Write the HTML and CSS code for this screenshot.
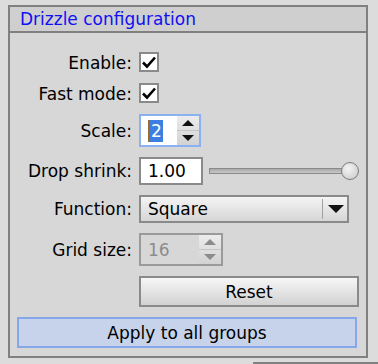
FILE: index.html
```html
<!DOCTYPE html>
<html lang="en">
<head>
    <meta charset="UTF-8">
    <meta name="viewport" content="width=device-width, initial-scale=1.0">
    <title>Drizzle configuration</title>
    <link rel="stylesheet" href="styles.css">
</head>
<body>
    <div class="panel">
        <div class="panel-title">Drizzle configuration</div>
        <div class="panel-body">
            <label class="label">Enable:</label>
            <div class="row">
                <span class="check">
                    <svg width="16" height="16" viewBox="0 0 16 16"><polyline points="2,8.5 6,12.5 14,3.5" fill="none" stroke="#000" stroke-width="2.6"/></svg>
                </span>
            </div>

            <label class="label">Fast mode:</label>
            <div class="row">
                <span class="check">
                    <svg width="16" height="16" viewBox="0 0 16 16"><polyline points="2,8.5 6,12.5 14,3.5" fill="none" stroke="#000" stroke-width="2.6"/></svg>
                </span>
            </div>

            <label class="label">Scale:</label>
            <div class="row">
                <div class="spin focused">
                    <div class="spin-text"><span class="selected">2</span></div>
                    <div class="spin-buttons">
                        <span class="spin-up"></span>
                        <span class="spin-down"></span>
                    </div>
                </div>
            </div>

            <label class="label">Drop shrink:</label>
            <div class="row">
                <div class="text-input">1.00</div>
                <div class="slider">
                    <div class="slider-track"></div>
                    <div class="slider-handle"></div>
                </div>
            </div>

            <label class="label">Function:</label>
            <div class="row">
                <div class="combo">
                    <span class="combo-text">Square</span>
                    <span class="combo-arrow"></span>
                </div>
            </div>

            <label class="label">Grid size:</label>
            <div class="row">
                <div class="spin is-disabled">
                    <div class="spin-text">16</div>
                    <div class="spin-buttons">
                        <span class="spin-up"></span>
                        <span class="spin-down"></span>
                    </div>
                </div>
            </div>

            <div></div>
            <div class="row">
                <button class="button reset">Reset</button>
            </div>

            <button class="button apply">Apply to all groups</button>
        </div>
    </div>
    <div class="next-panel"></div>
</body>
</html>
```

FILE: styles.css
```css
html, body {
    margin: 0;
    height: 100%;
    overflow: hidden;
}
body {
    font-family: 'DejaVu Sans', 'Liberation Sans', sans-serif;
    font-size: 17px;
    color: #000;
    background-color: #dcdcdc;
    padding: 5px 0 0 8px;
    box-sizing: border-box;
}
.panel {
    width: 360px;
    border: 2px solid #808080;
    box-sizing: border-box;
    background-color: #d7d7d7;
}
.panel-title {
    height: 24px;
    line-height: 24px;
    padding-left: 10px;
    color: #1010f4;
    background-color: #cfcfcf;
    border-bottom: 2px solid #808080;
}
.panel-body {
    display: grid;
    grid-template-columns: 115px 220px;
    grid-template-rows: 21px 21px 33px 28px 28px 33px 31px 31px;
    column-gap: 7px;
    row-gap: 10px;
    padding: 19px 7px 8px 7px;
}
.label {
    text-align: right;
    align-self: center;
    white-space: nowrap;
}
.row {
    display: flex;
    align-items: center;
}
.check {
    width: 20px;
    height: 20px;
    box-sizing: border-box;
    border: 2px solid #8a8a8a;
    background-color: #fff;
    display: flex;
    align-items: center;
    justify-content: center;
    align-self: flex-start;
}
.check svg {
    display: block;
}

/* spin box */
.spin {
    display: flex;
    height: 33px;
    box-sizing: border-box;
    border: 2px solid #9a9a9a;
}
.spin.focused {
    width: 62px;
    border-color: #8ab2f2;
}
.spin.is-disabled {
    width: 84px;
}
.spin-text {
    flex: 1;
    background-color: #fff;
    padding-left: 7px;
    display: flex;
    align-items: center;
}
.is-disabled .spin-text {
    background-color: #d7d7d7;
    color: #8c8c8c;
}
.selected {
    background-color: #3d7fe0;
    color: #fff;
    line-height: 22px;
    padding: 0 1px;
    border-left: 2px solid #9a6a30;
}
.spin-buttons {
    width: 22px;
    display: flex;
    flex-direction: column;
    background: linear-gradient(#ececec, #d2d2d2);
}
.spin-up, .spin-down {
    flex: 1;
    position: relative;
}
.spin-up {
    border-bottom: 1px solid #c4c4c4;
}
.spin-up::after, .spin-down::after {
    content: "";
    position: absolute;
    left: 50%;
    top: 50%;
    transform: translate(-50%, -50%);
    border-left: 6px solid transparent;
    border-right: 6px solid transparent;
}
.spin-up::after {
    border-bottom: 6px solid #111;
}
.spin-down::after {
    border-top: 6px solid #111;
}
.is-disabled .spin-up::after {
    border-bottom-color: #8c8c8c;
}
.is-disabled .spin-down::after {
    border-top-color: #8c8c8c;
}

/* drop shrink */
.text-input {
    width: 64px;
    height: 28px;
    box-sizing: border-box;
    border: 2px solid #8a8a8a;
    background-color: #fff;
    padding-left: 7px;
    line-height: 24px;
}
.slider {
    position: relative;
    width: 150px;
    height: 20px;
    margin-left: 6px;
}
.slider-track {
    position: absolute;
    left: 0;
    right: 10px;
    top: 7px;
    height: 6px;
    box-sizing: border-box;
    border: 1px solid #8a8a8a;
    background: linear-gradient(#a8a8a8, #c8c8c8);
}
.slider-handle {
    position: absolute;
    right: 0;
    top: 1px;
    width: 18px;
    height: 18px;
    box-sizing: border-box;
    border: 1px solid #7c7c7c;
    border-radius: 50%;
    background: radial-gradient(circle at 40% 35%, #f4f4f4, #c6c6c6);
}

/* combo */
.combo {
    width: 210px;
    height: 28px;
    box-sizing: border-box;
    border: 2px solid #8a8a8a;
    background: linear-gradient(#f4f4f4, #d6d6d6);
    display: flex;
    align-items: center;
}
.combo-text {
    flex: 1;
    padding-left: 7px;
}
.combo-arrow {
    width: 24px;
    height: 20px;
    border-left: 1px solid #a0a0a0;
    position: relative;
}
.combo-arrow::after {
    content: "";
    position: absolute;
    left: 5px;
    top: 6px;
    border-left: 8px solid transparent;
    border-right: 8px solid transparent;
    border-top: 8px solid #111;
}

/* buttons */
.button {
    font-family: inherit;
    font-size: 17px;
    color: #000;
    height: 31px;
    box-sizing: border-box;
    padding: 0;
}
.reset {
    width: 220px;
    border: 2px solid #8a8a8a;
    background: linear-gradient(#f6f6f6, #d2d2d2);
}
.apply {
    grid-column: 1 / 3;
    width: 340px;
    border: 2px solid #86a8ea;
    background-color: #c6d3ea;
}
.next-panel {
    margin: 4px 0 0 245px;
    border-top: 2px solid #808080;
}
```
